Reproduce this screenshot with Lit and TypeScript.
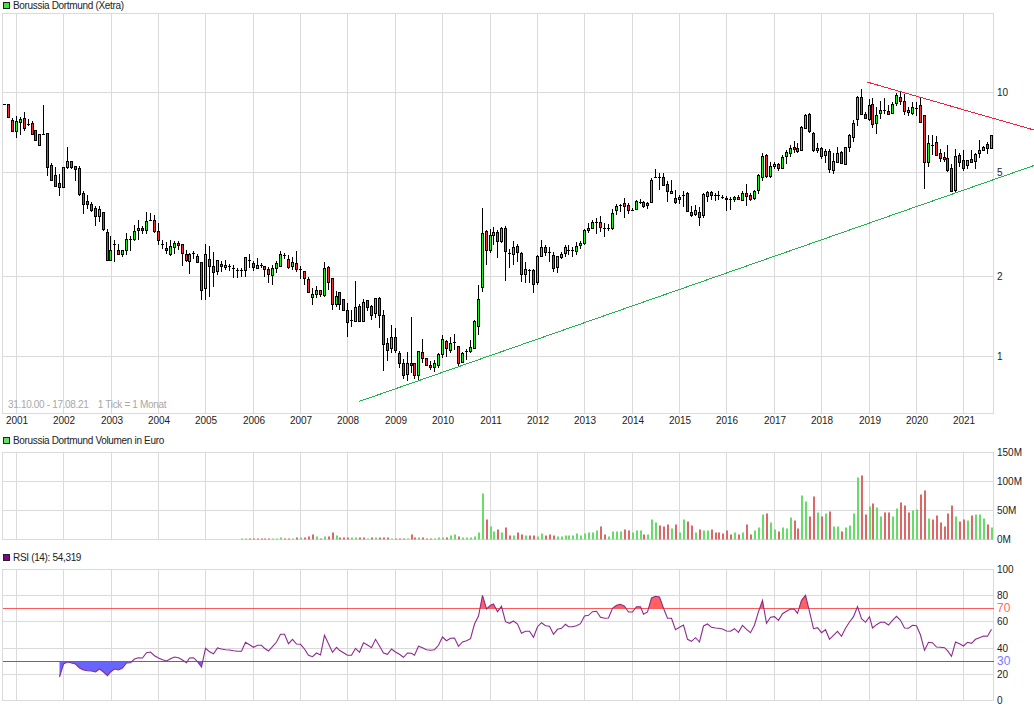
import { LitElement, html, svg, css } from 'lit';
import { customElement } from 'lit/decorators.js';

type Candle = [number, number, number, number, string];

// high, body top, body bottom, low in page pixels; g/r body, d = doji
const candles: Candle[] = [
  [104,104,104,104,'d'],[104,104,117,117,'r'],[118,120,131,131,'r'],[116,121,131,138,'g'],[117,119,122,135,'g'],
  [112,118,128,131,'r'],[119,124,124,126,'d'],[121,123,134,134,'r'],[130,130,140,140,'r'],[134,134,145,145,'g'],
  [105,134,134,134,'d'],[133,133,167,176,'r'],[163,165,180,180,'r'],[167,175,186,187,'r'],[174,183,187,196,'r'],
  [167,167,187,187,'g'],[147,161,167,169,'g'],[161,161,167,169,'r'],[166,166,169,181,'r'],[166,168,194,196,'r'],
  [191,193,204,214,'r'],[195,201,204,209,'r'],[202,204,210,212,'r'],[206,208,216,226,'r'],[206,209,216,222,'g'],
  [212,212,229,231,'r'],[229,232,260,260,'r'],[236,250,260,260,'g'],[240,244,244,262,'d'],[244,250,254,254,'r'],
  [250,250,254,257,'g'],[233,239,250,255,'g'],[236,239,239,251,'d'],[225,231,239,241,'g'],[220,228,230,240,'g'],
  [226,228,230,234,'r'],[212,221,230,234,'g'],[213,220,220,221,'d'],[215,220,231,233,'r'],[223,231,240,245,'r'],
  [240,244,244,249,'d'],[242,248,250,254,'r'],[240,246,254,256,'g'],[241,243,247,254,'g'],[241,243,245,250,'r'],
  [244,244,253,266,'r'],[250,254,260,262,'r'],[253,254,261,274,'g'],[251,253,253,259,'d'],[254,256,262,263,'r'],
  [262,262,290,300,'r'],[244,254,288,300,'g'],[246,259,266,297,'r'],[252,266,272,287,'r'],[260,260,271,275,'g'],
  [261,264,266,272,'r'],[260,265,267,270,'g'],[264,266,266,271,'d'],[265,268,268,278,'d'],[268,270,270,278,'d'],
  [268,270,270,277,'d'],[257,257,270,277,'g'],[254,260,260,268,'d'],[261,263,267,271,'r'],[258,265,268,269,'g'],
  [263,265,265,268,'d'],[266,266,269,277,'r'],[267,269,274,283,'r'],[265,268,275,285,'g'],[261,263,268,273,'g'],
  [251,254,266,266,'g'],[253,255,255,259,'d'],[255,259,267,269,'r'],[257,262,266,270,'g'],[251,263,269,272,'r'],
  [266,269,269,279,'d'],[271,271,278,285,'r'],[277,279,292,293,'r'],[288,294,297,305,'g'],[286,290,294,298,'g'],
  [290,290,294,297,'r'],[262,268,295,297,'g'],[266,267,282,290,'r'],[278,278,304,310,'r'],[291,296,304,307,'g'],
  [292,292,304,310,'r'],[299,299,310,311,'r'],[303,310,322,337,'r'],[310,320,320,327,'d'],[281,307,321,321,'g'],
  [304,306,321,321,'r'],[299,302,321,322,'g'],[300,300,307,311,'r'],[305,306,315,320,'r'],[298,298,313,318,'g'],
  [297,298,315,328,'r'],[310,315,344,371,'r'],[338,343,350,361,'r'],[325,337,348,353,'g'],[328,337,350,353,'r'],
  [351,353,363,368,'r'],[359,363,375,379,'r'],[352,363,374,381,'g'],[317,363,365,373,'r'],[363,363,375,379,'r'],
  [351,351,375,380,'g'],[339,352,358,363,'r'],[358,358,365,365,'r'],[361,365,367,370,'r'],[360,363,367,372,'g'],
  [353,354,365,368,'g'],[335,339,354,358,'g'],[340,341,348,357,'r'],[337,343,350,353,'g'],[334,342,342,350,'d'],
  [346,346,363,367,'r'],[352,353,362,363,'g'],[349,351,351,360,'d'],[340,347,351,353,'g'],[320,321,348,348,'g'],
  [285,299,326,335,'g'],[208,233,287,292,'g'],[230,231,250,265,'r'],[229,235,250,253,'g'],[227,232,235,245,'g'],
  [230,232,241,258,'r'],[227,228,241,243,'g'],[226,228,251,281,'r'],[249,253,253,268,'d'],[241,247,254,265,'g'],
  [244,246,252,262,'r'],[252,253,274,282,'r'],[262,269,274,283,'g'],[269,270,270,283,'d'],[269,270,284,293,'r'],
  [255,256,282,285,'g'],[240,247,256,256,'g'],[245,247,252,256,'r'],[247,252,252,262,'d'],[252,255,268,272,'r'],
  [256,256,267,273,'g'],[252,254,257,259,'g'],[245,247,253,257,'g'],[245,250,250,255,'d'],[247,250,250,257,'d'],
  [242,246,251,255,'g'],[241,243,245,249,'g'],[229,230,243,245,'g'],[223,228,230,233,'g'],[220,222,228,229,'g'],
  [218,222,222,234,'d'],[216,222,227,232,'r'],[223,228,228,237,'d'],[224,228,228,231,'d'],[209,213,228,230,'g'],
  [204,206,210,215,'g'],[204,205,205,212,'d'],[198,203,206,218,'r'],[203,205,210,214,'r'],[208,210,210,211,'d'],
  [200,201,209,209,'g'],[199,202,202,204,'d'],[201,202,206,208,'r'],[202,203,205,209,'g'],[178,180,202,203,'g'],
  [169,177,177,178,'d'],[173,177,177,190,'d'],[173,177,185,185,'r'],[181,184,191,202,'r'],[180,191,193,193,'g'],
  [190,198,202,204,'r'],[195,197,199,204,'g'],[191,195,195,207,'d'],[192,193,211,212,'r'],[206,212,215,217,'r'],
  [205,210,214,216,'g'],[207,212,217,226,'r'],[193,194,215,218,'g'],[191,192,196,202,'g'],[191,192,195,200,'r'],
  [193,195,195,201,'d'],[191,195,195,200,'d'],[195,197,197,199,'d'],[196,198,199,211,'r'],[197,199,199,210,'d'],
  [196,197,199,202,'g'],[195,197,199,200,'r'],[191,193,200,200,'g'],[184,193,196,206,'r'],[193,195,199,201,'r'],
  [190,191,198,200,'g'],[174,175,190,194,'g'],[153,156,177,181,'g'],[154,155,176,178,'r'],[162,166,176,178,'g'],
  [162,164,166,169,'g'],[163,164,168,171,'r'],[155,157,168,168,'g'],[150,152,156,164,'g'],[145,148,153,157,'g'],
  [141,147,149,153,'r'],[143,148,151,153,'r'],[126,127,150,150,'g'],[114,115,128,129,'g'],[113,114,131,133,'r'],
  [132,133,150,152,'r'],[143,148,150,153,'g'],[147,148,156,159,'r'],[149,151,155,163,'g'],[149,151,169,173,'r'],
  [153,161,170,174,'g'],[147,153,162,163,'g'],[151,152,163,164,'r'],[147,147,164,165,'g'],[134,135,147,152,'g'],
  [120,123,137,142,'g'],[96,97,119,126,'g'],[89,97,114,114,'r'],[112,114,118,119,'r'],[99,105,119,121,'g'],
  [98,104,124,128,'r'],[107,115,123,134,'g'],[101,110,113,119,'g'],[98,110,110,114,'d'],[105,111,114,115,'r'],
  [102,104,113,113,'g'],[93,95,103,106,'g'],[91,97,101,105,'r'],[94,101,111,115,'r'],[107,110,112,116,'g'],
  [102,107,113,115,'g'],[102,108,108,116,'d'],[98,105,122,123,'r'],[115,115,162,189,'r'],[135,143,162,167,'g'],
  [135,145,145,155,'d'],[136,142,155,156,'r'],[149,153,158,162,'r'],[152,157,159,162,'r'],[145,158,170,172,'r'],
  [164,168,191,192,'r'],[149,156,190,193,'g'],[153,155,162,167,'r'],[150,160,168,171,'r'],[160,160,165,169,'g'],
  [150,159,162,163,'r'],[153,154,161,169,'g'],[140,150,153,158,'g'],[146,147,150,151,'g'],[142,144,148,154,'r'],
  [135,135,148,149,'g'],
];

// bar colour + height in pixels, from candle 60 onward
const volume = ('g1 g1 r1 r1 r1 r1 r1 r1 g1 g1 g2 r1 r1 g1 r2 g2 r2 r3 r5 g3 r1 g3 r3 r7 g4 r2 ' +
  'r2 r2 g2 g2 r2 r2 g1 r2 g2 r2 r2 r2 g1 r1 r1 r1 g1 r5 r2 g2 r2 r1 r1 g1 g2 g2 r2 g4 g5 r3 g2 g2 g2 g3 g7 ' +
  'g46 r20 g13 g8 r10 g7 r12 r4 g4 r7 r5 g4 r4 r4 g3 g6 r4 r5 r4 g3 g3 g4 g4 g4 g6 g4 g6 g7 g7 g9 r13 r5 g3 ' +
  'g8 g8 g8 r10 r9 g7 g9 g9 r5 g5 g20 g17 r14 r13 r15 g11 r15 g7 g20 r18 r14 ' +
  'g7 r10 g9 g9 r10 r7 r7 r6 r9 r5 g7 r5 g7 r15 r5 g9 g12 g25 r26 g17 g10 r8 g12 g11 g22 r19 r11 g44 g38 r23 ' +
  'r43 g27 r23 g26 r28 g13 g13 r8 g12 g14 g26 g62 r64 r25 g33 r36 g32 g23 r27 r27 g23 g31 r37 r34 r27 g29 g30 ' +
  'r45 r49 g21 r20 r24 r17 r13 r26 r34 g23 r18 r20 g19 r24 g25 g25 g21 r15 g12').split(' ');

// RSI line y in pixels, from candle 14 onward
const rsi = [
  677,664,662,663,664,668,670,670.7,671,672,669,672,675.7,672,669,670,668,663,662.7,659,657.7,658,652.7,652,
  655.7,658,659.7,661,658.7,657,657.7,660,662.7,658,657.7,661.7,667,648.3,651.7,653.7,648,649,649.7,650,650.7,
  651.3,651.3,642.3,644.7,647.3,645.3,645.3,648.3,651,646.7,642,634.3,634.3,643.7,639.3,644,644.3,649,655.3,
  656.7,653,655,635.3,643.7,652.3,647.3,650.3,652.7,655.3,655.3,648.3,652.3,642.7,645,647.7,639.3,646,653,654.3,
  649,652,654.3,657.3,653,653.3,655.3,646.3,647.7,649.7,650.3,649.7,645.3,637,640.7,638.3,638,646.3,642,640.7,
  638.7,624,616,595.3,609,605.3,604,611.7,606.3,621.7,623.3,621,624,633.3,631.3,631.3,637.3,626.7,622.7,625.7,
  626.3,634.3,629.3,628.3,624.3,626.7,626.7,625.7,623.7,616,615.3,611.7,611.3,617.3,618.3,618,608.3,605.3,604.3,
  606.3,612,612,606.7,606.7,614.3,612,598,596.3,597,608.3,618.3,618.3,629.7,627.3,625,639.3,641.3,637.7,642,626,
  624,627.3,628,628.3,629,631,631.3,628.7,632.3,625.3,629.3,632.7,625,611.7,600.3,623.3,617.3,616.7,620.3,613.7,
  611.3,609,609.3,613.3,600.3,595.3,611.7,628.7,627.7,632.7,629.7,639.3,635.3,631.3,636.3,628.3,622,616.7,606.7,
  618.7,622.3,616.7,628,624.7,622.3,622.3,625,620.3,616.3,620.3,628,628.3,625.3,625.7,635,650.3,642.3,642.7,647,
  647.3,647.7,650.7,656.3,642,643.7,646,642.3,643.3,639.3,637.7,636,636.3,629.3,
];

const gridX = [16,63,111,158,205,253,300,347,395,442,490,537,584,632,679,726,774,821,869,916,963];
const years = gridX.map((_, i) => 2001 + i);
const candleX = (i: number) => Math.floor(4.4 + 3.948 * i) + 0.5;

const LEFT = 2.5;
const RIGHT = 993.5;
const RSI_HIGH = 608.5;
const RSI_LOW = 661.5;

@customElement('app-root')
export class AppRoot extends LitElement {
  static styles = css`
    :host {
      display: block;
      width: 1034px;
      height: 712px;
      overflow: hidden;
      background: #fff;
      font: 10px 'Liberation Sans', Arial, sans-serif;
      color: #222;
    }

    .page {
      display: flex;
      flex-direction: column;
    }

    .legend {
      display: flex;
      align-items: center;
      gap: 3px;
      height: 13px;
      padding-left: 3px;
      letter-spacing: -0.33px;
    }

    .legend.first {
      height: 11px;
      margin-bottom: 2px;
    }

    .volume-panel {
      margin-bottom: 6px;
    }

    .swatch {
      box-sizing: border-box;
      width: 7px;
      height: 7px;
      border: 1px solid #222;
    }

    .swatch.price { background: #33ee33; }
    .swatch.vol { background: #66dd66; }
    .swatch.rsi { background: #880088; }

    svg {
      display: block;
    }

    .grid {
      stroke: #dadada;
      stroke-width: 1;
      shape-rendering: crispEdges;
    }

    .wick {
      stroke: #000;
      stroke-width: 1;
      fill: none;
      shape-rendering: crispEdges;
    }

    .body {
      stroke: #000;
      stroke-width: 1;
      shape-rendering: crispEdges;
    }

    .body.g { fill: #22ee22; }
    .body.r { fill: #ee3333; }

    .bar.g { fill: #66dd66; }
    .bar.r { fill: #dd6666; }

    .trend {
      stroke-width: 1;
      shape-rendering: crispEdges;
    }

    text {
      font: 10px 'Liberation Sans', Arial, sans-serif;
      fill: #222;
    }

    .axis-year { text-anchor: middle; }
    .range { fill: #a8a8a8; letter-spacing: -0.33px; }
    .hi-label { font-size: 12px; fill: #ff6666; }
    .lo-label { font-size: 12px; fill: #7777ff; }

    .rsi-line {
      fill: none;
      stroke: #8e2a8e;
      stroke-width: 1.1;
    }
  `;

  // frame and horizontal/vertical rules, coordinates are page pixels
  private grid(top: number, bottom: number, rows: number[]) {
    return svg`
      ${rows.map((y) => svg`<line class="grid" x1=${LEFT} x2=${RIGHT} y1=${y + 0.5} y2=${y + 0.5}></line>`)}
      ${[2, ...gridX, 993].map((x) => svg`<line class="grid" x1=${x + 0.5} x2=${x + 0.5} y1=${top} y2=${bottom + 1}></line>`)}
    `;
  }

  private labels(items: [string, number][]) {
    return items.map(([t, y]) => svg`<text x="997" y=${y + 4}>${t}</text>`);
  }

  private renderCandles() {
    return candles.map(([h, t, b, l, c], i) => {
      const x = candleX(i);
      const wick = h < l ? svg`<line class="wick" x1=${x} x2=${x} y1=${h} y2=${l}></line>` : null;
      if (c === 'd') {
        return svg`${wick}<line class="wick" x1=${x - 1.5} x2=${x + 1.5} y1=${t + 0.5} y2=${t + 0.5}></line>`;
      }
      return svg`${wick}<rect class="body ${c}" x=${x - 1} y=${t + 0.5} width="2" height=${b - t}></rect>`;
    });
  }

  private priceChart() {
    return html`
      <svg width="1034" height="421" viewBox="0 13 1034 421">
        ${this.grid(13, 413, [13, 92, 172, 276, 356, 413])}
        ${this.renderCandles()}
        <line class="trend" x1="359" y1="401.5" x2="1034" y2="165.5" stroke="#22b050"></line>
        <line class="trend" x1="867" y1="82" x2="1034" y2="130" stroke="#f02040"></line>
        ${this.labels([['10', 92], ['5', 172], ['2', 276], ['1', 356]])}
        <text class="range" x="8" y="408">31.10.00 - 17.08.21 &nbsp; <tspan dx="2">1 Tick = 1 Monat</tspan></text>
        ${years.map((y, i) => svg`<text class="axis-year" x=${gridX[i] + 1} y="424">${y}</text>`)}
      </svg>
    `;
  }

  private volumeChart() {
    return html`
      <svg width="1034" height="98" viewBox="0 447 1034 98">
        ${this.grid(452, 539, [452, 481, 510, 539])}
        ${volume.map((v, i) => {
          const h = Number(v.slice(1));
          return svg`<rect class="bar ${v[0]}" x=${Math.floor(candleX(i + 60))} y=${539.5 - h} width="2" height=${h}></rect>`;
        })}
        ${this.labels([['150M', 452], ['100M', 481], ['50M', 510], ['0M', 539]])}
      </svg>
    `;
  }

  private rsiChart() {
    const pts = rsi.map((y, i) => `${candleX(i + 14)},${y}`).join(' ');
    const x0 = candleX(14);
    const x1 = candleX(250);
    return html`
      <svg width="1034" height="148" viewBox="0 564 1034 148">
        <defs>
          <clipPath id="above"><rect x="0" y="569" width="1034" height=${RSI_HIGH - 569}></rect></clipPath>
          <clipPath id="below"><rect x="0" y=${RSI_LOW} width="1034" height="60"></rect></clipPath>
        </defs>
        ${this.grid(569, 700, [569, 595, 621, 648, 674, 700])}
        <polygon points="${x0},${RSI_HIGH} ${pts} ${x1},${RSI_HIGH}" fill="#ff6060" clip-path="url(#above)"></polygon>
        <polygon points="${x0},${RSI_LOW} ${pts} ${x1},${RSI_LOW}" fill="#6666ff" clip-path="url(#below)"></polygon>
        <line x1=${LEFT} x2=${RIGHT} y1=${RSI_HIGH} y2=${RSI_HIGH} stroke="#ff5a5a" shape-rendering="crispEdges"></line>
        <line x1=${LEFT} x2=${RIGHT} y1=${RSI_LOW} y2=${RSI_LOW} stroke="#5a5af0" shape-rendering="crispEdges"></line>
        <polyline class="rsi-line" points=${pts}></polyline>
        ${this.labels([['100', 569], ['80', 595], ['60', 621], ['40', 648], ['20', 674], ['0', 700]])}
        <text class="hi-label" x="997" y="612">70</text>
        <text class="lo-label" x="997" y="665">30</text>
      </svg>
    `;
  }

  render() {
    return html`
      <div class="page">
        <section>
          <div class="legend first"><span class="swatch price"></span>Borussia Dortmund (Xetra)</div>
          ${this.priceChart()}
        </section>
        <section class="volume-panel">
          <div class="legend"><span class="swatch vol"></span>Borussia Dortmund Volumen in Euro</div>
          ${this.volumeChart()}
        </section>
        <section>
          <div class="legend"><span class="swatch rsi"></span>RSI (14): 54,319</div>
          ${this.rsiChart()}
        </section>
      </div>
    `;
  }
}
